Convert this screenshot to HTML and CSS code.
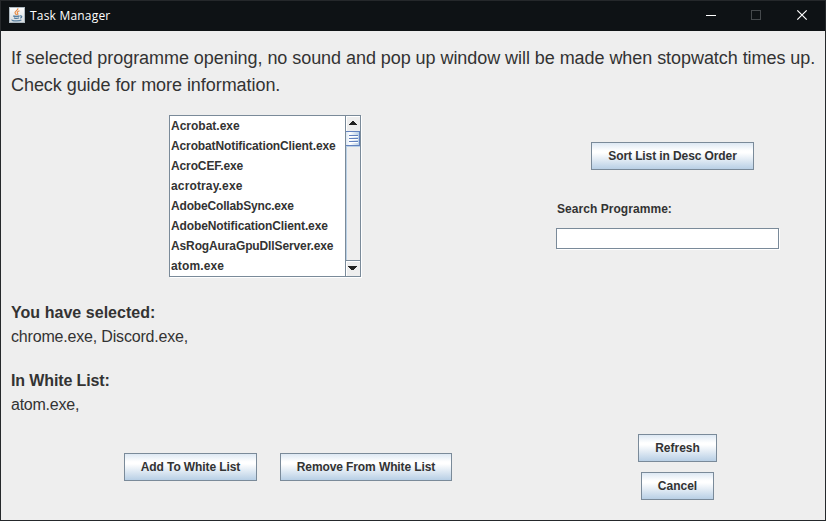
FILE: index.html
```html
<!DOCTYPE html>
<html lang="en">
<head>
<meta charset="utf-8">
<title>Task Manager</title>
<link rel="stylesheet" href="styles.css">
</head>
<body>
<div class="window">
  <header class="titlebar">
    <svg class="java-icon" width="16" height="16" viewBox="0 0 16 16">
      <defs><linearGradient id="tile" x1="0" y1="0" x2="0" y2="1"><stop offset="0" stop-color="#ffffff"/><stop offset="1" stop-color="#d3d9dd"/></linearGradient></defs>
      <rect width="16" height="16" fill="url(#tile)"/>
      <rect x=".5" y=".5" width="15" height="15" fill="none" stroke="#aeb9c1"/>
      <path d="M8.800 1.200C9.700 3 5.800 4 6 5.800C6.100 6.900 7.400 7.100 7.500 8.200M10.500 3.800C8 4.700 8 5.500 8.700 6.300C9.100 6.900 8.800 7.500 8.500 8" fill="none" stroke="#e78a43" stroke-width="1.200"/>
      <path d="M4.200 8.900C5.500 9.600 9.200 9.500 10.600 8.900M5 10.800C6.500 11.500 9 11.400 10 10.800M11 8.900C13.400 8.500 13 10.700 11.200 11.200M3.200 12.600C1.800 14.200 11 14.300 12.400 12.900" fill="none" stroke="#587f9f" stroke-width="1.300"/>
    </svg>
    <span class="title">Task Manager</span>
    <svg class="controls" width="138" height="30" viewBox="0 0 138 30">
      <path d="M19 14.500h10" stroke="#fff"/>
      <rect x="64.500" y="9.500" width="9" height="9" fill="none" stroke="#45494c"/>
      <path d="M110.300 9.300l9.400 9.400M119.700 9.300l-9.400 9.400" stroke="#fff" stroke-width="1.200"/>
    </svg>
  </header>
  <main class="content">
    <div class="intro">
      <p class="intro-first">If selected programme opening, no sound and pop up window will be made when stopwatch times up.</p>
      <p class="intro-second">Check guide for more information.</p>
    </div>
    <div class="middle">
      <div class="list-pane">
        <ul class="list">
          <li class="even">Acrobat.exe</li>
          <li>AcrobatNotificationClient.exe</li>
          <li>AcroCEF.exe</li>
          <li class="loose">acrotray.exe</li>
          <li class="tight">AdobeCollabSync.exe</li>
          <li>AdobeNotificationClient.exe</li>
          <li>AsRogAuraGpuDllServer.exe</li>
          <li class="loose">atom.exe</li>
        </ul>
        <div class="scrollbar">
          <div class="arrow up"><svg width="14" height="15"><path d="M3 9h8v-1h-1v-1h-1v-1h-1v-1h-2v1h-1v1h-1v1h-1z" fill="#222"/></svg></div>
          <div class="thumb"><svg width="14" height="13"><path d="M3 3.500h9M3 6.500h9M3 9.500h9" stroke="#6382bf"/><path d="M3 4.500h9M3 7.500h9M3 10.500h9" stroke="#fff"/></svg></div>
          <div class="track"></div>
          <div class="arrow down"><svg width="14" height="15"><path d="M2 5h9v1h-1v1h-1v1h-1v1h-3v-1h-1v-1h-1v-1h-1z" fill="#222"/></svg></div>
        </div>
      </div>
      <div class="search">
        <button class="btn sort"><span>Sort List in Desc Order</span></button>
        <label for="programme">Search Programme:</label>
        <input id="programme" type="text">
      </div>
    </div>
    <div class="summary">
      <h2 class="h-selected">You have selected:</h2>
      <p class="p-selected">chrome.exe, Discord.exe,</p>
      <h2 class="h-white">In White List:</h2>
      <p class="p-white">atom.exe,</p>
    </div>
    <div class="actions">
      <div class="list-actions">
        <button class="btn add"><span>Add To White List</span></button>
        <button class="btn remove"><span>Remove From White List</span></button>
      </div>
      <div class="side-actions">
        <button class="btn refresh"><span>Refresh</span></button>
        <button class="btn cancel"><span>Cancel</span></button>
      </div>
    </div>
  </main>
</div>
</body>
</html>
```
FILE: styles.css
```css
* { box-sizing: border-box; }
body { margin: 0; font-family: "Liberation Sans", Arial, sans-serif; color: #333; }
p, h2, ul { margin: 0; padding: 0; }
.window { width: 826px; height: 521px; border: 1px solid #25282b; background: #eee; overflow: hidden; white-space: nowrap; }
.titlebar { display: flex; align-items: center; height: 30px; padding-left: 8px; background: #0e1215; }
.java-icon { margin-top: -2px; }
.title { margin-left: 5px; font: 12px/16px "Open Sans", "Noto Sans", sans-serif; letter-spacing: .2px; color: #fff; }
.controls { margin-left: auto; }
.intro { padding: 14px 0 0 10px; font-size: 18px; line-height: 27px; letter-spacing: -.056px; }
.middle { display: flex; margin-top: 16px; height: 162px; }
.list-pane { display: flex; width: 192px; height: 162px; margin-left: 168px; border: 1px solid #7a8a99; box-shadow: 1px 1px #fff; background: #fff; }
.list { width: 175px; padding-left: 1px; list-style: none; font-size: 12px; font-weight: bold; line-height: 20px; letter-spacing: -.12px; overflow: hidden; }
.list .even { letter-spacing: 0; }
.list .loose { letter-spacing: .14px; }
.list .tight { letter-spacing: -.17px; }
.scrollbar { display: flex; flex-direction: column; width: 15px; border-left: 1px solid #7a8a99; background: #eee; }
.arrow { height: 15px; background: #eee; box-shadow: inset 1px 1px #fff; }
.thumb { height: 15px; border: 1px solid #6382bf; border-left: 0; background: linear-gradient(90deg, #dce8f4, #fff 30%, #b8cfe5); }
.arrow svg, .thumb svg { display: block; }
.track { flex: 1; border-left: 1px solid #b8cfe5; border-top: 1px solid #b8cfe5; }
.down { border-top: 1px solid #7a8a99; height: 16px; }
.search { display: flex; flex-direction: column; width: 223px; margin-left: 195px; padding-top: 27px; }
.btn { display: block; height: 28px; padding: 0; border: 1px solid #7a8a99; background: linear-gradient(#dde8f3, #fff 30%, #fff 38%, #b8cfe5); font: bold 12px/26px "Liberation Sans", Arial, sans-serif; color: #333; text-align: center; }
.sort { width: 163px; margin-left: 35px; letter-spacing: -.1px; }
.search label { height: 20px; margin: 29px 0 9px 1px; font-size: 12px; font-weight: bold; line-height: 20px; letter-spacing: .05px; }
.search input { width: 223px; height: 21px; padding: 0 2px; border: 1px solid #7a8a99; box-shadow: 1px 1px #fff; background: #fff; }
.summary { margin-top: 24px; padding-left: 10px; font-size: 16px; line-height: 24px; letter-spacing: -.18px; }
.summary h2 { font-size: 16px; line-height: 24px; }
.summary .h-selected { letter-spacing: .04px; }
.summary .h-white { padding-top: 20px; letter-spacing: -.12px; }
.p-white { letter-spacing: -.24px; }
.actions { display: flex; margin-top: 17px; }
.list-actions { display: flex; gap: 23px; width: 637px; padding: 19px 0 0 123px; }
.add { width: 133px; letter-spacing: -.1px; }
.remove { width: 172px; letter-spacing: -.1px; }
.side-actions { display: flex; flex-direction: column; align-items: center; gap: 10px; width: 79px; }
.refresh { width: 79px; }
.cancel { width: 73px; }
```
